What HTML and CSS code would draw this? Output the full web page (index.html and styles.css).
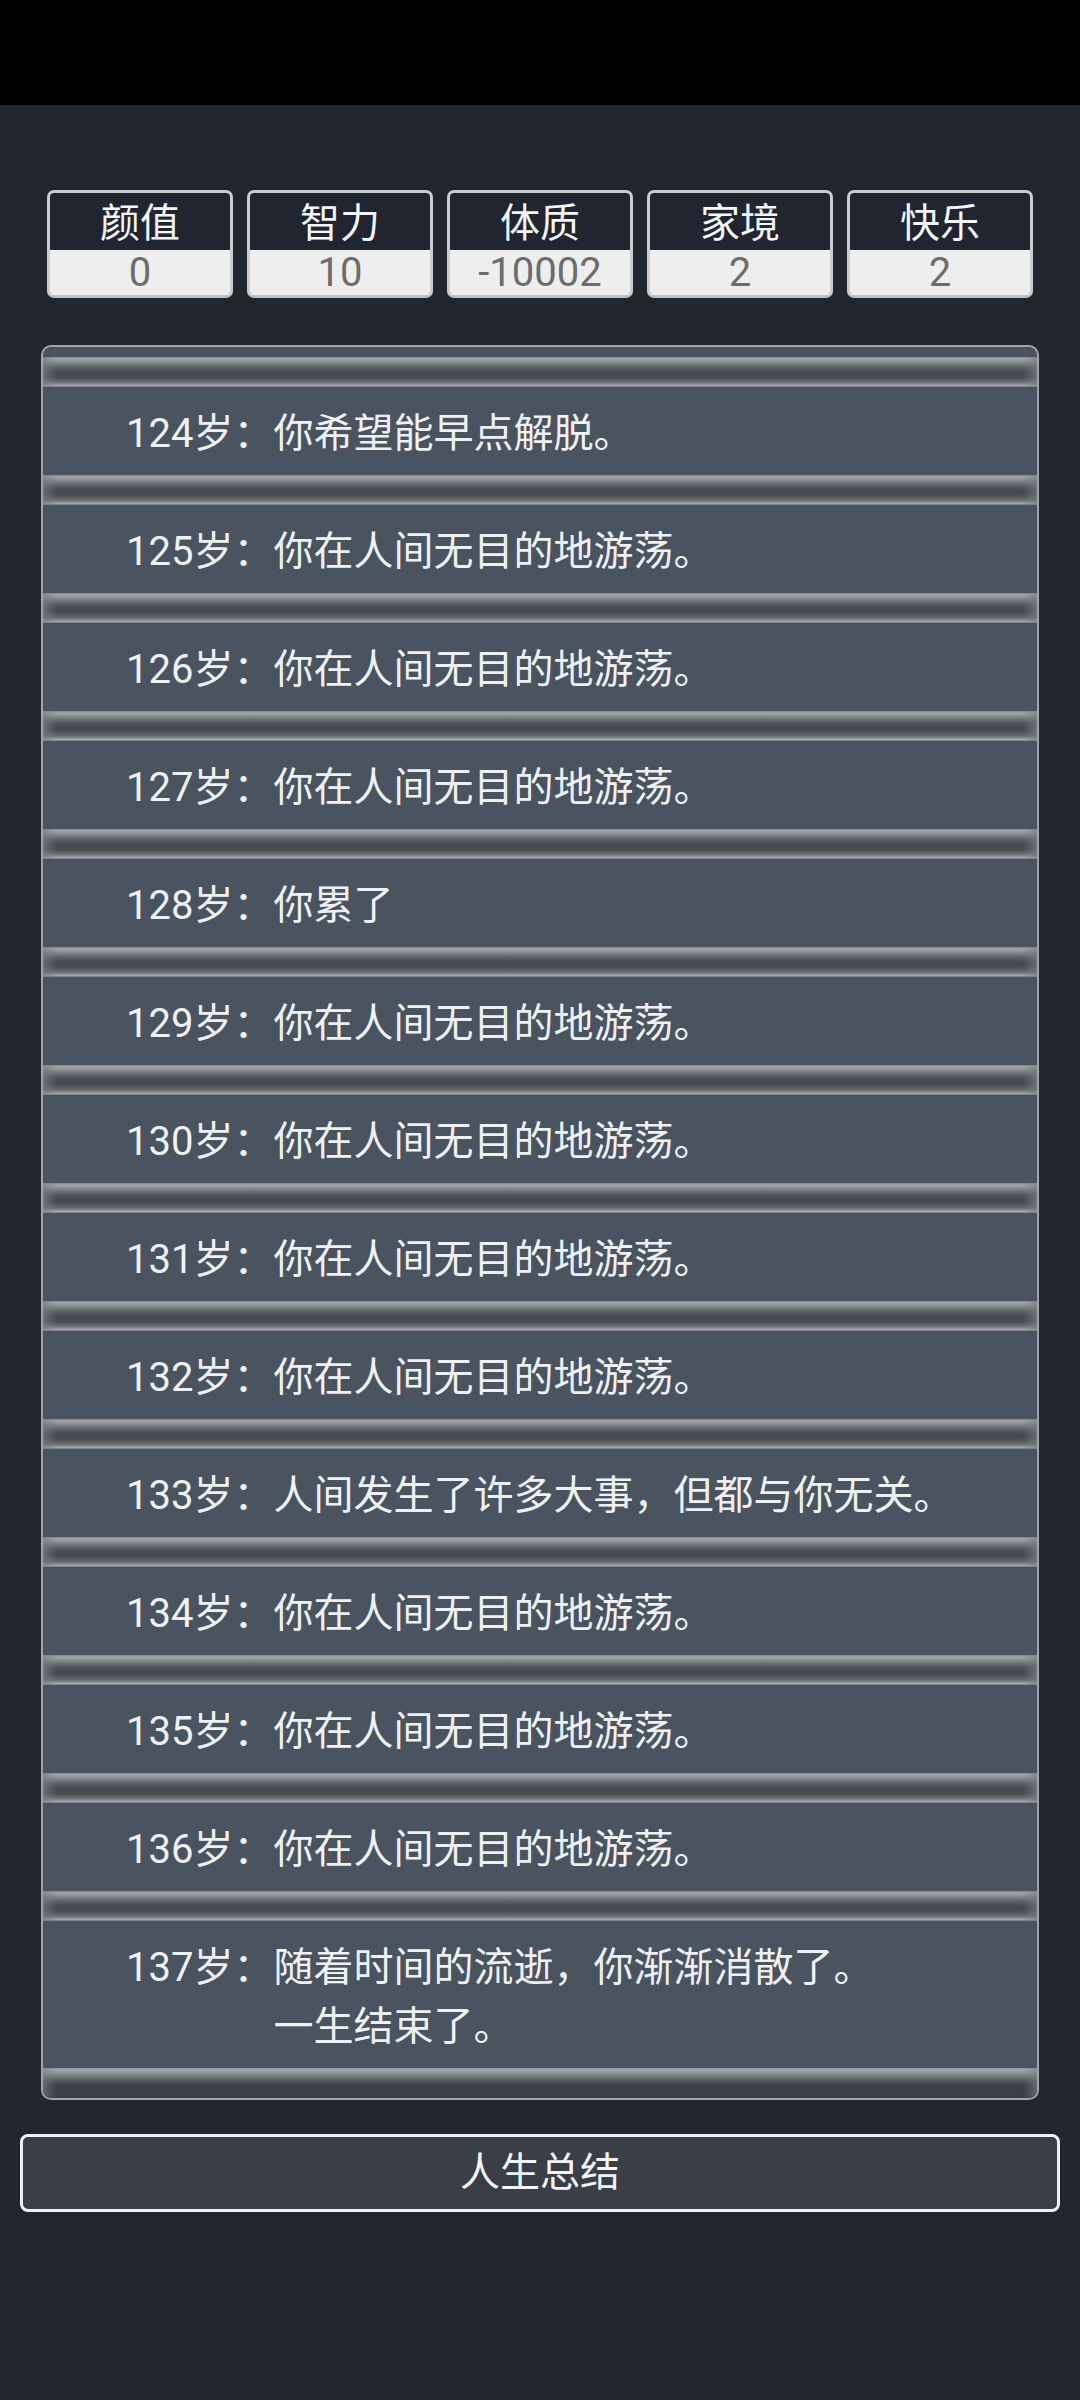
FILE: index.html
```html
<!DOCTYPE html>
<html lang="zh-CN">
<head>
<meta charset="utf-8">
<title>人生重开</title>
<link rel="stylesheet" href="styles.css">
</head>
<body>
<div class="statusbar"></div>
<div class="stats">
  <div class="stat"><div class="stat-label">颜值</div><div class="stat-value">0</div></div>
  <div class="stat"><div class="stat-label">智力</div><div class="stat-value">10</div></div>
  <div class="stat"><div class="stat-label">体质</div><div class="stat-value">-10002</div></div>
  <div class="stat"><div class="stat-label">家境</div><div class="stat-value">2</div></div>
  <div class="stat"><div class="stat-label">快乐</div><div class="stat-value">2</div></div>
</div>
<div class="panel">
  <ul class="log">
    <li class="item"><span class="age">124岁：</span><span class="text">你希望能早点解脱。</span></li>
    <li class="item"><span class="age">125岁：</span><span class="text">你在人间无目的地游荡。</span></li>
    <li class="item"><span class="age">126岁：</span><span class="text">你在人间无目的地游荡。</span></li>
    <li class="item"><span class="age">127岁：</span><span class="text">你在人间无目的地游荡。</span></li>
    <li class="item"><span class="age">128岁：</span><span class="text">你累了</span></li>
    <li class="item"><span class="age">129岁：</span><span class="text">你在人间无目的地游荡。</span></li>
    <li class="item"><span class="age">130岁：</span><span class="text">你在人间无目的地游荡。</span></li>
    <li class="item"><span class="age">131岁：</span><span class="text">你在人间无目的地游荡。</span></li>
    <li class="item"><span class="age">132岁：</span><span class="text">你在人间无目的地游荡。</span></li>
    <li class="item"><span class="age">133岁：</span><span class="text">人间发生了许多大事，但都与你无关。</span></li>
    <li class="item"><span class="age">134岁：</span><span class="text">你在人间无目的地游荡。</span></li>
    <li class="item"><span class="age">135岁：</span><span class="text">你在人间无目的地游荡。</span></li>
    <li class="item"><span class="age">136岁：</span><span class="text">你在人间无目的地游荡。</span></li>
    <li class="item"><span class="age">137岁：</span><span class="text">随着时间的流逝，你渐渐消散了。<br>一生结束了。</span></li>
  </ul>
  <div class="cap"></div>
</div>
<button class="summary">人生总结</button>
</body>
</html>
```
FILE: styles.css
```css
* { box-sizing: border-box; }
html, body {
  margin: 0;
  padding: 0;
  background: #21262f;
  font-family: Roboto, "Noto Sans CJK SC", sans-serif;
  color: #eef0f2;
}
.statusbar {
  height: 105px;
  background: #000;
}
.stats {
  display: flex;
  gap: 14px;
  padding: 0 47px;
  margin-top: 85px;
}
.stat {
  flex: 1;
  height: 108px;
  border: 3px solid #c9cbce;
  border-bottom-color: #bfc1c4;
  border-radius: 7px;
  overflow: hidden;
  display: flex;
  flex-direction: column;
  background: #eeeeee;
}
.stat-label {
  height: 57px;
  background: #202530;
  color: #f4f5f7;
  font-size: 40px;
  line-height: 57px;
  padding-top: 2px;
  text-align: center;
}
.stat-value {
  flex: 1;
  color: #6c6c6c;
  font-size: 40px;
  line-height: 46px;
  text-align: center;
}
.panel {
  margin: 47px 41px 0;
  border: 2px solid #a0a4aa;
  border-radius: 10px;
  background: #4a5360;
  padding-top: 10px;
  overflow: hidden;
}
.log {
  list-style: none;
  margin: 0;
  padding: 0;
}
.item {
  position: relative;
  display: flex;
  padding: 47px 20px 12px 83px;
  font-size: 40px;
  line-height: 59px;
  background:
    linear-gradient(to bottom,
      #858a90 0px, #a2a6ac 2px, #80848b 6px, #575b62 11px,
      #44484f 16px, #484c53 20px, #676b72 25px, #999da3 28px,
      #b2b6bb 29px, #4a5360 30px) top / 100% 30px no-repeat,
    #4a5360;
}
.item::before {
  content: "";
  position: absolute;
  left: 0;
  right: 0;
  top: 0;
  height: 30px;
  background: linear-gradient(to right,
    rgba(120,125,132,0.7) 0px, rgba(120,125,132,0) 14px,
    rgba(120,125,132,0) calc(100% - 14px), rgba(120,125,132,0.7) 100%);
}
.age {
  white-space: nowrap;
  flex: none;
}
.text {
  flex: 1;
}
.cap {
  position: relative;
  height: 30px;
  background: linear-gradient(to bottom,
    #8d9197 0px, #a3a7ad 2px, #7f838a 7px, #575b62 12px,
    #40444b 16px, #3b3f46 20px, #3a3e45 100%);
}
.cap::before {
  content: "";
  position: absolute;
  inset: 0;
  background: linear-gradient(to right,
    rgba(120,125,132,0.6) 0px, rgba(120,125,132,0) 14px,
    rgba(120,125,132,0) calc(100% - 14px), rgba(120,125,132,0.6) 100%);
}
.summary {
  display: block;
  margin: 34px 20px 0;
  width: calc(100% - 40px);
  height: 78px;
  border: 3px solid #eef0f3;
  border-radius: 8px;
  background: #3a3e46;
  color: #f2f3f5;
  font-family: Roboto, "Noto Sans CJK SC", sans-serif;
  font-size: 40px;
  line-height: 72px;
  padding: 0;
  text-align: center;
}
```
